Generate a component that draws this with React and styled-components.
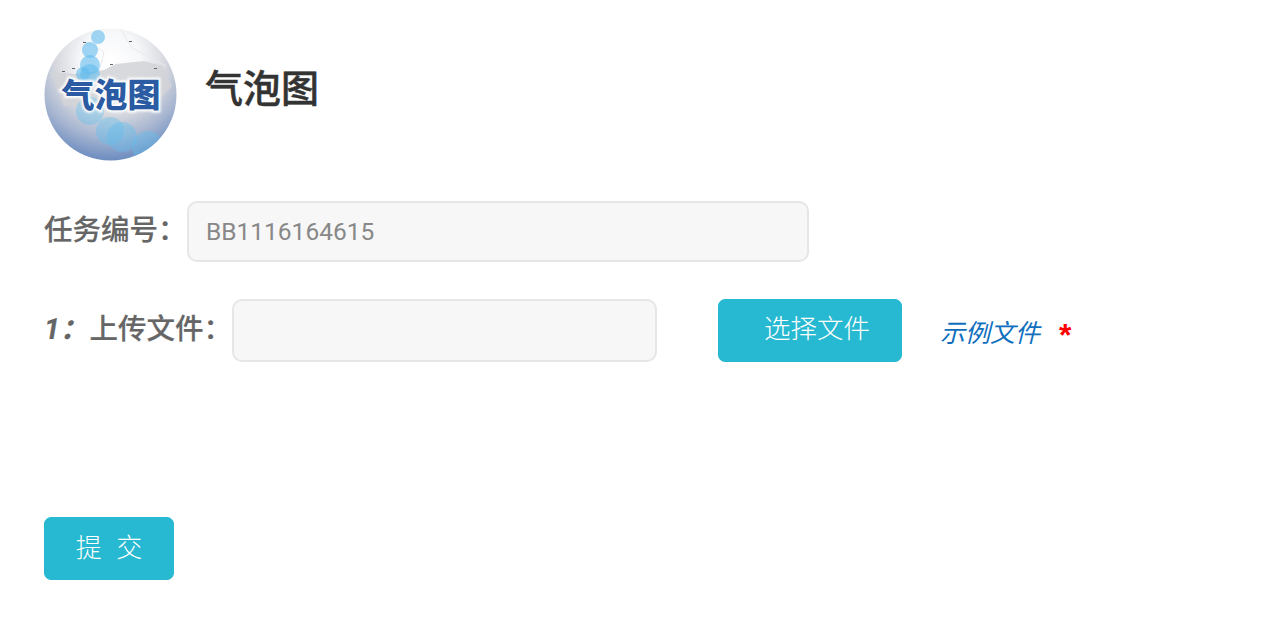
import React from "react";
import styled, { createGlobalStyle } from "styled-components";

const GlobalStyle = createGlobalStyle`
  html, body {
    margin: 0;
    padding: 0;
    background: #fff;
  }
  body {
    font-family: "Liberation Sans", "Noto Sans CJK SC", sans-serif;
  }
`;

const Page = styled.div`
  width: 1270px;
  height: 626px;
  box-sizing: border-box;
  padding: 28px 0 0 44px;
  overflow: hidden;
  display: flex;
  flex-direction: column;
`;

const Header = styled.header`
  display: flex;
  align-items: flex-start;
  gap: 28px;
`;

const Title = styled.h1`
  margin: 37px 0 0;
  font-size: 38px;
  line-height: 48px;
  font-weight: 500;
  color: #333;
  -webkit-text-stroke: 0.5px #333;
`;

const Row = styled.div`
  display: flex;
  align-items: center;
  margin-top: ${(p) => p.$top}px;
`;

const Label = styled.label`
  font-size: 28.5px;
  line-height: 40px;
  font-weight: 500;
  color: #666;
  white-space: nowrap;
  position: relative;
  top: ${(p) => p.$shift}px;
  width: ${(p) => p.$width}px;
  flex: none;
  -webkit-text-stroke: 0.2px #666;
`;

const Num = styled.i`
  font-family: Roboto, "Noto Sans CJK SC", sans-serif;
  font-weight: 700;
  margin-right: 1px;
`;

const Input = styled.input`
  box-sizing: border-box;
  flex: none;
  width: ${(p) => p.$width}px;
  height: ${(p) => p.$height}px;
  padding: 0 17px;
  background: #f7f7f7;
  border: 2px solid #e6e6e6;
  border-radius: 10px;
  font-family: Roboto, sans-serif;
  font-size: 24.5px;
  color: #888;
  outline: none;
`;

const Button = styled.button`
  box-sizing: border-box;
  flex: none;
  display: flex;
  align-items: center;
  justify-content: center;
  padding: 0;
  background: #27b9d1;
  border: 1px solid #27b9d1;
  border-radius: 7px;
  color: #fff;
  font-family: inherit;
  font-weight: 300;
`;

const FileButton = styled(Button)`
  width: 184px;
  height: 63px;
  margin-left: 61px;
  padding: 0 0 8px 14px;
  font-size: 26.5px;
`;

const SubmitButton = styled(Button)`
  width: 130px;
  height: 63px;
  padding-bottom: 6px;
  font-size: 26px;
  white-space: pre;
`;

const SampleLink = styled.a`
  margin-left: 38px;
  font-size: 25px;
  font-style: italic;
  font-weight: 400;
  color: #0f6fbe;
`;

const Required = styled.span`
  margin-left: 19px;
  font-size: 32px;
  font-weight: 700;
  color: #f00;
  position: relative;
  top: 5px;
`;

const Logo = () => (
  <svg width="133" height="133" viewBox="0 0 133 133" style={{ flex: "none" }}>
    <defs>
      <radialGradient id="globe" cx="0.5" cy="0.24" r="0.76">
        <stop offset="0" stopColor="#ffffff" />
        <stop offset="0.3" stopColor="#f6f7f9" />
        <stop offset="0.55" stopColor="#d6d8de" />
        <stop offset="0.78" stopColor="#a5b4d0" />
        <stop offset="1" stopColor="#6c8cc0" />
      </radialGradient>
      <clipPath id="ball">
        <circle cx="66.5" cy="66.5" r="66" />
      </clipPath>
      <filter id="soft">
        <feGaussianBlur stdDeviation="0.6" />
      </filter>
      <filter id="glow" x="-10%" y="-30%" width="120%" height="160%">
        <feGaussianBlur stdDeviation="1" />
      </filter>
    </defs>
    <circle cx="66.5" cy="66.5" r="66" fill="url(#globe)" />
    <g clipPath="url(#ball)" filter="url(#soft)">
      <path
        d="M6 44 L30 46 L60 42 L72 36 L100 33 L118 38 L128 58 L110 78 L20 78 Z"
        fill="#d2d3d7"
        fillOpacity="0.85"
      />
      <path d="M30 8 L60 24 L56 40 M76 0 L88 20 L122 38" stroke="#e6e9ee" strokeWidth="1" fill="none" />
      <g fill="#5e656e">
        <rect x="39" y="14" width="3" height="1" />
        <rect x="85" y="13" width="3" height="1" />
        <rect x="66" y="36" width="3" height="1" />
        <rect x="28" y="40" width="3" height="1" />
        <rect x="110" y="40" width="3" height="1" />
        <rect x="18" y="43" width="3" height="1" />
      </g>
      <g fill="#62bdee" fillOpacity="0.6">
        <circle cx="54" cy="9" r="7" />
        <circle cx="46" cy="22" r="8" />
        <circle cx="46" cy="37" r="10" />
        <circle cx="46" cy="46" r="10" />
        <circle cx="39" cy="46" r="7" />
      </g>
      <g fill="#62bdee" fillOpacity="0.4">
        <circle cx="46" cy="83" r="14" />
        <circle cx="66" cy="103" r="14" />
        <circle cx="78" cy="109" r="15" />
        <circle cx="104" cy="119" r="16" />
      </g>
    </g>
    <text
      x="67"
      y="79"
      textAnchor="middle"
      fontFamily="'Noto Sans CJK SC', serif"
      fontSize="33"
      fontWeight="900"
      fill="#ffffff"
      stroke="#ffffff"
      strokeWidth="4"
      filter="url(#glow)"
    >
      气泡图
    </text>
    <text
      x="67"
      y="79"
      textAnchor="middle"
      fontFamily="'Noto Sans CJK SC', serif"
      fontSize="33"
      fontWeight="900"
      fill="#2a5ba3"
    >
      气泡图
    </text>
  </svg>
);

const App = () => {
  return (
    <Page>
      <GlobalStyle />
      <Header>
        <Logo />
        <Title>气泡图</Title>
      </Header>
      <Row $top={40}>
        <Label $width={143} $shift={-2}>任务编号：</Label>
        <Input $width={622} $height={61} defaultValue="BB1116164615" readOnly />
      </Row>
      <Row $top={37}>
        <Label $width={188} $shift={-1}>
          <Num>1：</Num>上传文件：
        </Label>
        <Input $width={425} $height={63} readOnly />
        <FileButton>选择文件</FileButton>
        <SampleLink>示例文件</SampleLink>
        <Required>*</Required>
      </Row>
      <Row $top={155}>
        <SubmitButton>提 &nbsp;交</SubmitButton>
      </Row>
    </Page>
  );
};

export default App;
